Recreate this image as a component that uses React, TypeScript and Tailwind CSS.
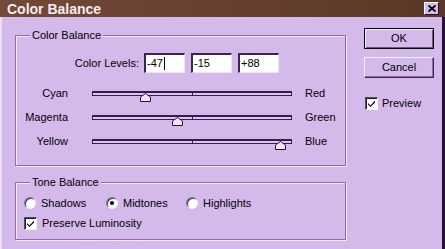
import React from "react";

const font = { fontFamily: '"Liberation Sans", Arial, sans-serif' };

function Group({ title, className, children }: { title: string; className: string; children: React.ReactNode }) {
  return (
    <div
      className={`relative border border-[#8f6aaa] shadow-[inset_1px_1px_0_#f3e8fa,1px_1px_0_#f3e8fa] ${className}`}
    >
      <span className="absolute -top-[8px] left-[14px] bg-[#d4baea] px-[2px] text-[11px] leading-[14px] text-black">
        {title}
      </span>
      {children}
    </div>
  );
}

function Field({ value, caret }: { value: string; caret?: boolean }) {
  return (
    <div className="flex h-[20px] w-[41px] items-center border-t-2 border-l-2 border-b border-r border-t-[#3a2450] border-l-[#3a2450] border-b-[#efe2f8] border-r-[#efe2f8] bg-white pl-[1px] text-[11px] text-black">
      <span>{value}</span>
      {caret && <span className="ml-[1px] inline-block h-[13px] w-[1px] bg-black" />}
    </div>
  );
}

function Slider({ left, right, value }: { left: string; right: string; value: number }) {
  const pos = 100 + value; // 0..200
  return (
    <div className="flex h-[24px] items-center text-[11px] text-black">
      <span className="w-[52px] text-right">{left}</span>
      <div className="relative ml-[24px] h-[5px] w-[200px] border border-t-2 border-[#3a1a52] bg-[#dcc6ee]">
        <div className="absolute left-[99px] -top-[2px] h-[5px] w-[1px] bg-[#3a1a52]" />
        <svg
          className="absolute top-[0px]"
          style={{ left: pos - 6 }}
          width="11"
          height="9"
          viewBox="0 0 11 9"
        >
          <path d="M5.5 0.5 L10.5 4 L10.5 8.5 L0.5 8.5 L0.5 4 Z" fill="#f1e6f8" stroke="#2a1038" strokeWidth="1" />
        </svg>
      </div>
      <span className="ml-[13px]">{right}</span>
    </div>
  );
}

function Radio({ checked }: { checked?: boolean }) {
  return (
    <span className="relative inline-flex h-[12px] w-[12px] items-center justify-center rounded-full border border-t-[#7a6a86] border-l-[#7a6a86] border-b-[#f4ecfa] border-r-[#f4ecfa] bg-white shadow-[inset_1px_1px_0_#404040]">
      {checked && <span className="h-[4px] w-[4px] rounded-full bg-black" />}
    </span>
  );
}

function Check() {
  return (
    <span className="inline-flex h-[13px] w-[13px] items-center justify-center border border-t-[#5a4a66] border-l-[#5a4a66] border-b-[#f4ecfa] border-r-[#f4ecfa] bg-white shadow-[inset_1px_1px_0_#202020]">
      <svg width="9" height="9" viewBox="0 0 9 9">
        <path d="M1 4 L3.5 6.5 L8 1.5 L8 3.5 L3.5 8 L1 5.5 Z" fill="#000" />
      </svg>
    </span>
  );
}

export default function App() {
  return (
    <div className="flex h-[249px] w-[445px] flex-col overflow-hidden bg-[#d4baea]" style={font}>
      <div className="flex h-[17px] items-center justify-between bg-gradient-to-r from-[#74493a] to-[#5b3727] pl-[7px] pr-[6px]">
        <span className="text-[14px] font-bold leading-none text-[#f4eef0]">Color Balance</span>
        <span className="flex h-[13px] w-[15px] items-center justify-center border border-t-white border-l-white border-b-[#2a1038] border-r-[#2a1038] bg-[#d4baea]">
          <svg width="8" height="7" viewBox="0 0 8 7">
            <path d="M0.5 0.5 L7.5 6.5 M7.5 0.5 L0.5 6.5" stroke="#000" strokeWidth="1.8" />
          </svg>
        </span>
      </div>
      <div className="flex flex-1 border-l-2 border-r-[3px] border-l-[#ecdff6] border-r-[#2a1038]">
        <div className="ml-[13px] flex flex-col">
          <Group title="Color Balance" className="mt-[18px] h-[131px] w-[331px]">
            <div className="flex items-center pt-[17px] text-[11px] text-black">
              <span className="w-[123px] text-right">Color Levels:</span>
              <div className="ml-[5px] flex gap-[6px]">
                <Field value="-47" caret />
                <Field value="-15" />
                <Field value="+88" />
              </div>
            </div>
            <div className="mt-[8px] flex flex-col">
              <Slider left="Cyan" right="Red" value={-47} />
              <Slider left="Magenta" right="Green" value={-15} />
              <Slider left="Yellow" right="Blue" value={88} />
            </div>
          </Group>
          <Group title="Tone Balance" className="mt-[16px] h-[58px] w-[331px]">
            <div className="flex flex-col gap-[4px] pl-[8px] pt-[12px] text-[11px] text-black">
              <div className="flex h-[16px] items-center">
                <div className="flex w-[82px] items-center gap-[5px]">
                  <Radio />
                  <span>Shadows</span>
                </div>
                <div className="flex w-[80px] items-center gap-[5px]">
                  <Radio checked />
                  <span>Midtones</span>
                </div>
                <div className="flex items-center gap-[5px]">
                  <Radio />
                  <span>Highlights</span>
                </div>
              </div>
              <div className="flex h-[16px] items-center gap-[5px]">
                <Check />
                <span>Preserve Luminosity</span>
              </div>
            </div>
          </Group>
        </div>
        <div className="ml-[18px] flex flex-col text-[11px] text-black">
          <button className="mt-[11px] flex h-[21px] w-[70px] items-center justify-center border border-black bg-[#d4baea] shadow-[inset_1px_1px_0_#f6eefc,inset_-1px_-1px_0_#6e5282]">
            OK
          </button>
          <button className="mt-[8px] flex h-[21px] w-[70px] items-center justify-center border border-t-[#f6eefc] border-l-[#f6eefc] border-b-[#3a2450] border-r-[#3a2450] bg-[#d4baea] shadow-[inset_-1px_-1px_0_#8e70a6]">
            Cancel
          </button>
          <div className="ml-[1px] mt-[17px] flex items-center gap-[4px]">
            <Check />
            <span>Preview</span>
          </div>
        </div>
      </div>
    </div>
  );
}
